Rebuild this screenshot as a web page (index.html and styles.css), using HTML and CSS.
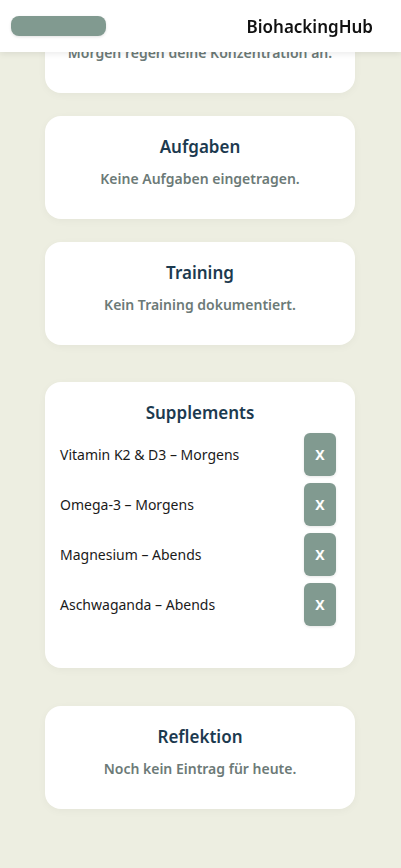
FILE: index.html
```html
<!DOCTYPE html>
<html lang="de">
<head>
<meta charset="utf-8">
<title>BiohackingHub</title>
<link rel="stylesheet" href="styles.css">
</head>
<body>
<header class="topbar">
  <div class="pill"></div>
  <div class="brand">BiohackingHub</div>
</header>
<main class="content">
  <section class="card card-first">
    <p class="card-text">Morgen regen deine Konzentration an.</p>
  </section>
  <section class="card">
    <h3 class="card-title">Aufgaben</h3>
    <p class="card-text">Keine Aufgaben eingetragen.</p>
  </section>
  <section class="card">
    <h3 class="card-title">Training</h3>
    <p class="card-text">Kein Training dokumentiert.</p>
  </section>
  <section class="card card-list">
    <h3 class="card-title">Supplements</h3>
    <ul class="supp-list">
      <li class="supp-item"><span>Vitamin K2 &amp; D3 – Morgens</span><button class="del">X</button></li>
      <li class="supp-item"><span>Omega-3 – Morgens</span><button class="del">X</button></li>
      <li class="supp-item"><span>Magnesium – Abends</span><button class="del">X</button></li>
      <li class="supp-item"><span>Aschwaganda – Abends</span><button class="del">X</button></li>
    </ul>
  </section>
  <section class="card">
    <h3 class="card-title">Reflektion</h3>
    <p class="card-text">Noch kein Eintrag für heute.</p>
  </section>
</main>
</body>
</html>
```
FILE: styles.css
```css
* { box-sizing: border-box; }
html, body {
  margin: 0;
  padding: 0;
}
body {
  background: #edeee1;
  font-family: "Noto Sans", "Open Sans", sans-serif;
  height: 868px;
  overflow: hidden;
}
.topbar {
  position: fixed;
  top: 0;
  left: 0;
  right: 0;
  height: 52px;
  background: #ffffff;
  display: flex;
  align-items: center;
  justify-content: space-between;
  padding: 0 28px 0 11px;
  box-shadow: 0 2px 6px rgba(0,0,0,0.08);
  z-index: 10;
}
.pill {
  width: 95px;
  height: 20px;
  border-radius: 8px;
  background: #819a90;
  box-shadow: 0 1px 3px rgba(0,0,0,0.12);
}
.brand {
  font-size: 17px;
  font-weight: 600;
  color: #111;
}
.content {
  margin-top: -10px;
  padding-left: 45px;
  display: flex;
  flex-direction: column;
  align-items: flex-start;
  gap: 23px;
}
.card {
  width: 310px;
  background: #ffffff;
  border-radius: 16px;
  padding: 20px 15px;
  box-shadow: 0 2px 8px rgba(0,0,0,0.04);
  text-align: center;
}
.card-first {
  padding-top: 42px;
}
.card-list {
  margin: 14px 0 15px;
  text-align: left;
}
.card-title {
  margin: 0;
  font-size: 17px;
  line-height: 22px;
  font-weight: 600;
  color: #1c3a4f;
  text-align: center;
}
.card-text {
  margin: 10px 0 10px;
  font-size: 14px;
  line-height: 21px;
  font-weight: 600;
  color: #6c7a77;
}
.supp-list {
  list-style: none;
  margin: 9px 0 22px;
  padding: 0 4px 0 0;
  display: flex;
  flex-direction: column;
  gap: 7px;
}
.supp-item {
  display: flex;
  align-items: center;
  justify-content: space-between;
  font-size: 14px;
  color: #1a1a1a;
}
.del {
  width: 32px;
  height: 43px;
  border: none;
  border-radius: 6px;
  background: #819a90;
  color: #ffffff;
  font-family: "Noto Sans", sans-serif;
  font-size: 14px;
  font-weight: 700;
  padding: 0;
  box-shadow: 0 1px 3px rgba(0,0,0,0.1);
}
```
